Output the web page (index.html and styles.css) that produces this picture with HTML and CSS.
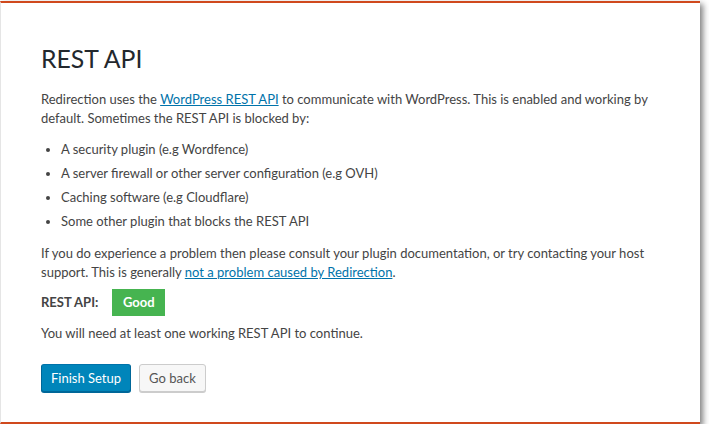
FILE: index.html
```html
<!DOCTYPE html>
<html lang="en">
<head>
    <meta charset="UTF-8">
    <title>REST API</title>
    <link rel="stylesheet" href="styles.css">
</head>
<body>
    <div class="wizard">
        <h1>REST API</h1>
        <p class="intro">Redirection uses the <a href="#">WordPress REST API</a> to communicate with WordPress. This is enabled and working by default. Sometimes the REST API is blocked by:</p>
        <ul class="causes">
            <li>A security plugin (e.g Wordfence)</li>
            <li>A server firewall or other server configuration (e.g OVH)</li>
            <li>Caching software (e.g Cloudflare)</li>
            <li>Some other plugin that blocks the REST API</li>
        </ul>
        <p class="advice">If you do experience a problem then please consult your plugin documentation, or try contacting your host support. This is generally <a href="#">not a problem caused by Redirection</a>.</p>
        <div class="status">
            <span class="status-label">REST API:</span>
            <span class="badge good">Good</span>
        </div>
        <p class="note">You will need at least one working REST API to continue.</p>
        <div class="actions">
            <button class="btn btn-primary">Finish Setup</button>
            <button class="btn">Go back</button>
        </div>
    </div>
</body>
</html>
```
FILE: styles.css
```css
body {
    margin: 0;
    padding: 1px 0 0;
    font-family: Lato, "Open Sans", sans-serif;
    font-size: 13px;
    color: #444;
    background: #fff;
}
.wizard {
    box-sizing: border-box;
    width: 700px;
    display: flex;
    flex-direction: column;
    align-items: flex-start;
    padding: 38px 30px 30px 40px;
    background: #fff;
    border-top: 2px solid #d0491d;
    border-bottom: 2px solid #d0491d;
    border-left: 1px solid #e5e5e5;
    box-shadow: 3px 3px 6px rgba(0,0,0,0.5);
}
h1 {
    margin: 0;
    font-size: 24.8px;
    font-weight: 400;
    line-height: 35px;
    color: #23282d;
}
p {
    margin: 0;
    line-height: 19px;
}
a {
    color: #0073aa;
}
.intro {
    margin-top: 14px;
}
.causes {
    margin: 12px 0 0;
    padding-left: 20px;
    display: flex;
    flex-direction: column;
    gap: 6px;
}
.causes li {
    line-height: 18px;
}
.advice {
    margin-top: 14px;
}
.status {
    margin-top: 7px;
    display: flex;
    align-items: center;
    gap: 14px;
}
.status-label {
    font-weight: 700;
    line-height: 19px;
}
.badge {
    display: inline-block;
    padding: 0 10.5px;
    line-height: 27px;
    font-weight: 700;
    color: #fff;
}
.good {
    background-color: #46b450;
}
.note {
    margin-top: 8px;
}
.actions {
    margin-top: 21px;
    display: flex;
    gap: 8px;
}
.btn {
    height: 28px;
    padding: 0 9px;
    font-family: inherit;
    font-size: 13px;
    line-height: 26px;
    color: #555;
    background: #f7f7f7;
    border: 1px solid #ccc;
    border-radius: 3px;
    box-shadow: 0 1px 0 #ccc;
    cursor: pointer;
}
.btn-primary {
    color: #fff;
    background: #0085ba;
    border-color: #0073aa #006799 #006799;
    box-shadow: 0 1px 0 #006799;
}
```
